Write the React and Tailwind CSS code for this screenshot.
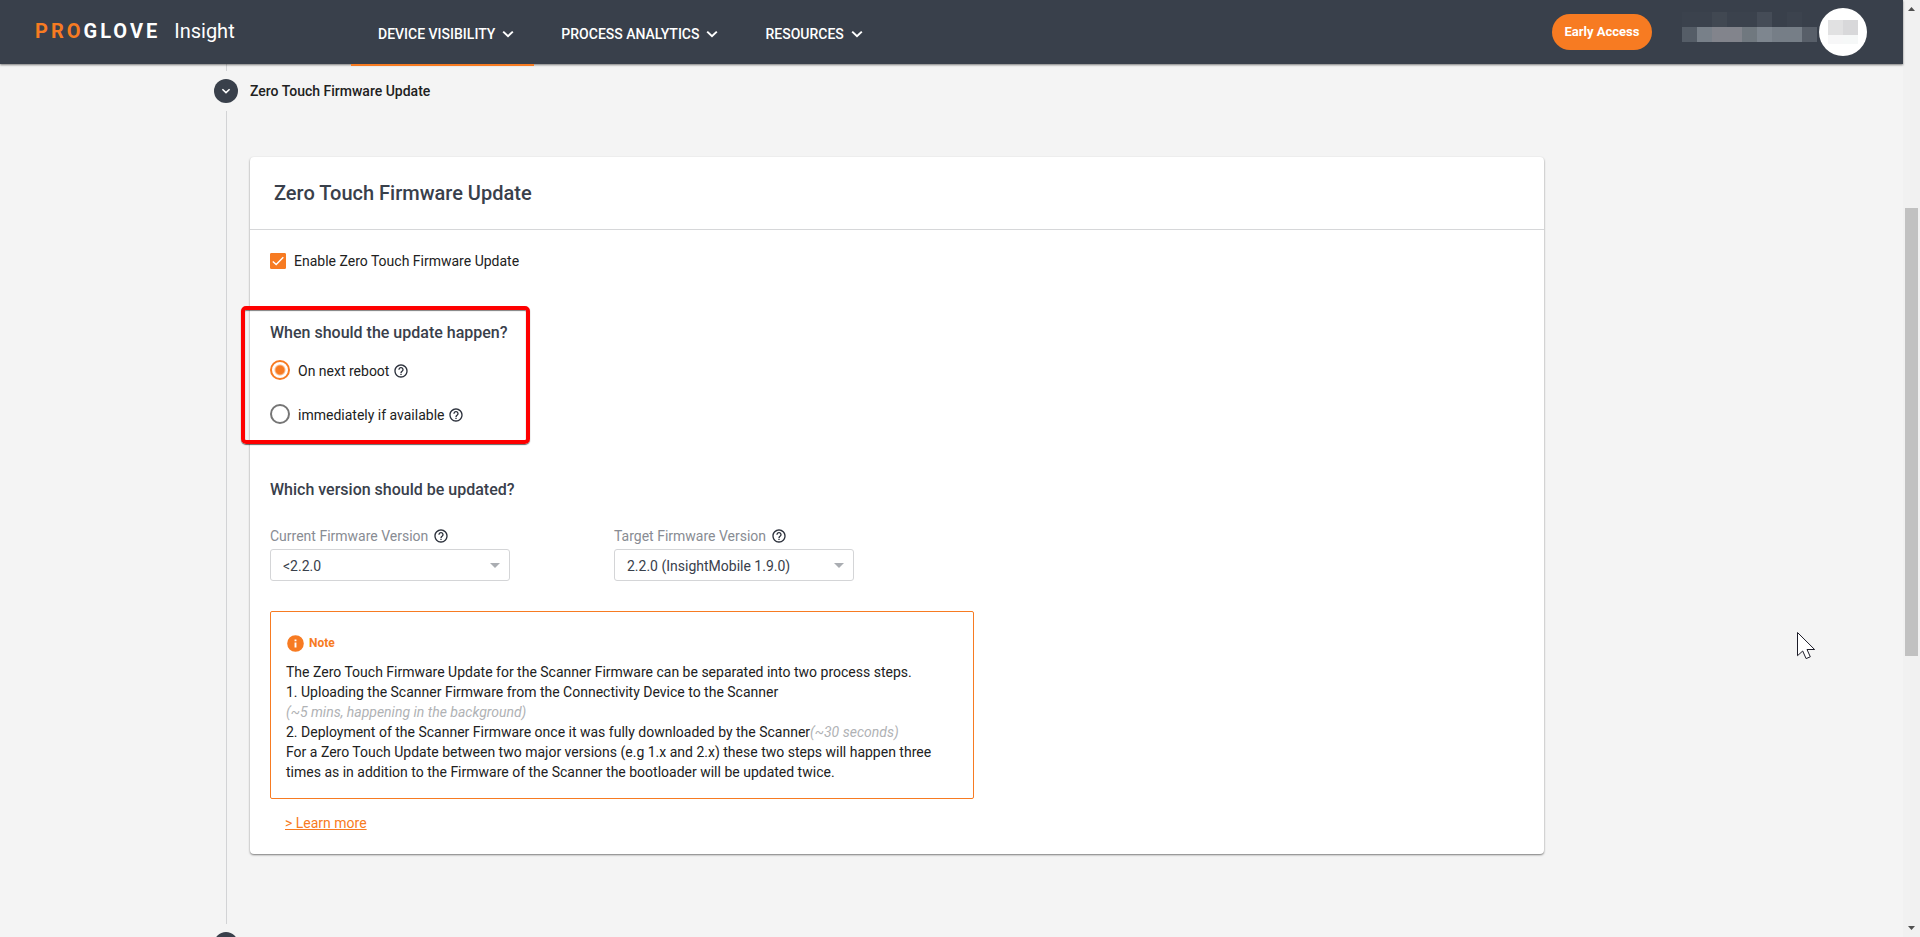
import React, { useState } from "react";

const NAV_ITEMS = ["DEVICE VISIBILITY", "PROCESS ANALYTICS", "RESOURCES"];

function ChevronDown({ className }) {
  return (
    <svg viewBox="0 0 24 24" className={className} fill="none" stroke="currentColor" strokeWidth="2" aria-hidden="true">
      <path d="M7.2 9.6 12 14.2l4.8-4.6" />
    </svg>
  );
}

function HelpIcon() {
  return (
    <svg viewBox="0 0 24 24" className="size-4 shrink-0 text-[#2b303b]" fill="currentColor" aria-hidden="true">
      <path d="M11 18h2v-2h-2v2zm1-16C6.480 2 2 6.480 2 12s4.480 10 10 10 10-4.480 10-10S17.520 2 12 2zm0 18c-4.410 0-8-3.590-8-8s3.590-8 8-8 8 3.590 8 8-3.590 8-8 8zm0-14c-2.210 0-4 1.790-4 4h2c0-1.100.9-2 2-2s2 .9 2 2c0 2-3 1.750-3 5h2c0-2.250 3-2.500 3-5 0-2.210-1.790-4-4-4z" />
    </svg>
  );
}

function RedactedName() {
  const top = ["bg-[#3b424d]", "bg-[#3b424d]", "bg-[#414852]", "bg-[#3b424d]", "bg-[#3b424d]", "bg-[#454c57]", "bg-[#39404b]", "bg-[#3c434e]", "bg-[#39404b]"];
  const bottom = ["bg-[#555d67]", "bg-[#788089]", "bg-[#82848c]", "bg-[#82848c]", "bg-[#70787f]", "bg-[#7e868f]", "bg-[#767e87]", "bg-[#767e87]", "bg-[#585f69]"];
  return (
    <div className="grid grid-cols-9 w-[135px]" aria-hidden="true">
      {[...top, ...bottom].map((c, i) => (
        <span key={i} className={"h-[15px] " + c} />
      ))}
    </div>
  );
}

function Header() {
  return (
    <header className="relative z-10 flex h-16 shrink-0 items-stretch bg-[#39404b] shadow-[0_1px_2px_rgba(0,0,0,0.5)]">
      <a href="#home" className="flex w-[351px] shrink-0 items-center pb-[2px] pl-[35px] text-white">
        <span className="text-[20px] font-bold tracking-[3px]">
          <span className="text-[#f77b22]">PRO</span>GLOVE
        </span>
        <span className="pl-[14px] text-[20px]">Insight</span>
      </a>
      <nav className="flex items-stretch">
        {NAV_ITEMS.map((label, i) => (
          <button
            key={label}
            type="button"
            className={
              "-mb-[2px] flex items-center gap-px border-b-2 pt-1 pl-[27px] pr-[14px] text-[14px] font-medium text-white " +
              (i === 0 ? "border-[#f77b22]" : "border-transparent")
            }
          >
            {label}
            <ChevronDown className="size-6" />
          </button>
        ))}
      </nav>
      <div className="ml-auto flex items-center pr-9">
        <button type="button" className="h-9 w-[100px] rounded-full bg-[#f77b22] text-[13px] font-bold text-white">
          Early Access
        </button>
        <div className="ml-[30px] mr-[2px] -mt-[10px]">
          <RedactedName />
        </div>
        <div className="flex size-12 items-center justify-center rounded-full bg-white">
          <div className="grid grid-cols-2 w-[30px]" aria-hidden="true">
            <span className="h-[15px] bg-[#e1e1e2]" />
            <span className="h-[15px] bg-[#d8d8da]" />
            <span className="h-[9px] bg-[#f7f7f8]" />
            <span className="h-[9px] bg-[#f6f8f8]" />
          </div>
        </div>
      </div>
    </header>
  );
}

function StepDot() {
  return (
    <span className="flex size-6 shrink-0 items-center justify-center rounded-full bg-[#39404b] text-white">
      <ChevronDown className="size-[18px]" />
    </span>
  );
}

function RadioOption({ id, label, checked, onChange }) {
  return (
    <div className="flex h-5 items-center">
      <input
        id={id}
        type="radio"
        name="update-time"
        checked={checked}
        onChange={onChange}
        className="size-5 shrink-0 appearance-none rounded-full border-2 border-[#757575] bg-white checked:border-[#f77b22] checked:bg-[radial-gradient(circle,#f77b22_4px,transparent_6px)]"
      />
      <label htmlFor={id} className="pl-2 pr-1 pt-[2px] text-[14px] leading-5 text-[#212121]">
        {label}
      </label>
      <span className="pt-[2px]">
        <HelpIcon />
      </span>
    </div>
  );
}

function VersionSelect({ id, label, options }) {
  return (
    <div className="w-60">
      <div className="flex items-center gap-[5px]">
        <label htmlFor={id} className="text-[14px] leading-5 text-[#888c93]">
          {label}
        </label>
        <HelpIcon />
      </div>
      <div className="relative mt-[3px]">
        <select
          id={id}
          className="block h-8 w-full appearance-none rounded-[3px] border border-[#d4d5d7] bg-white pl-3 pr-8 pt-[2px] text-[14px] text-[#39404b]"
        >
          {options.map((o) => (
            <option key={o}>{o}</option>
          ))}
        </select>
        <svg viewBox="0 0 10 5" className="pointer-events-none absolute right-[10px] top-[14px] h-[5px] w-[10px] text-[#aaadb2]" aria-hidden="true">
          <path d="M0 0h10L5 5z" fill="currentColor" />
        </svg>
      </div>
    </div>
  );
}

function NoteBox() {
  return (
    <section className="mt-[30px] max-w-[704px] rounded-[2px] border border-[#f77b22] px-[15px] pb-4 pt-[23px]">
      <h4 className="flex items-center gap-1 text-[12px] font-bold leading-4 text-[#f77b22]">
        <svg viewBox="0 0 24 24" className="-my-[2px] size-[19px]" aria-hidden="true">
          <path
            fill="currentColor"
            d="M12 1.500a10.500 10.500 0 1 0 0 21 10.500 10.500 0 0 0 0-21zM13.200 17h-2.400v-6.200h2.400v6.200zm0-7.800h-2.400V7h2.400v2.200z"
          />
        </svg>
        Note
      </h4>
      <div className="pt-[11px] text-[14px] leading-5 text-[#212121]">
        <p>The Zero Touch Firmware Update for the Scanner Firmware can be separated into two process steps.</p>
        <p>1. Uploading the Scanner Firmware from the Connectivity Device to the Scanner</p>
        <p className="italic text-[#b0b2b5]">(~5 mins, happening in the background)</p>
        <p>
          2. Deployment of the Scanner Firmware once it was fully downloaded by the Scanner
          <em className="text-[#b0b2b5]">(~30 seconds)</em>
        </p>
        <p>
          For a Zero Touch Update between two major versions (e.g 1.x and 2.x) these two steps will happen three times
          as in addition to the Firmware of the Scanner the bootloader will be updated twice.
        </p>
      </div>
    </section>
  );
}

function UpdateCard() {
  const [enabled, setEnabled] = useState(true);
  const [when, setWhen] = useState("reboot");
  return (
    <section className="rounded bg-white shadow-[0_1px_2px_rgba(0,0,0,0.5)]">
      <h2 className="border-b border-[#d6d7d9] px-6 py-5 text-[20px] font-medium leading-8 text-[#39404b]">
        Zero Touch Firmware Update
      </h2>
      <div className="px-5 pb-[19px] pt-[21px]">
        <div className="flex items-center">
          <span className="relative flex size-4">
            <input
              id="enable"
              type="checkbox"
              checked={enabled}
              onChange={(e) => setEnabled(e.target.checked)}
              className="peer size-4 appearance-none rounded-[1px] border border-[#757575] checked:border-[#f77b22] checked:bg-[#f77b22]"
            />
            <svg viewBox="0 0 16 16" className="pointer-events-none absolute inset-0 size-4 opacity-0 peer-checked:opacity-100" fill="none" stroke="#fff" strokeWidth="1.4" aria-hidden="true">
              <path d="M2.800 8.400 6.200 11.600 13.300 4.300" />
            </svg>
          </span>
          <label htmlFor="enable" className="pl-2 text-[14px] leading-5 text-[#212121]">
            Enable Zero Touch Firmware Update
          </label>
        </div>

        <div role="radiogroup" aria-labelledby="when-heading" className="relative mt-[50px]">
          <h3 id="when-heading" className="text-[16px] font-medium leading-6 text-[#39404b]">
            When should the update happen?
          </h3>
          <div className="flex flex-col gap-6 pt-[15px]">
            <RadioOption id="reboot" label="On next reboot" checked={when === "reboot"} onChange={() => setWhen("reboot")} />
            <RadioOption id="immediate" label="immediately if available" checked={when === "immediate"} onChange={() => setWhen("immediate")} />
          </div>
          <div className="pointer-events-none absolute -bottom-5 -left-[29px] -top-[15px] w-[289px] rounded-[5px] border-4 border-[#fe0000] shadow-[0_1px_1px_rgba(0,0,0,0.6),inset_0_1px_1px_rgba(0,0,0,0.5)]" />
        </div>

        <h3 className="mt-[54px] text-[16px] font-medium leading-6 text-[#39404b]">Which version should be updated?</h3>
        <div className="mt-6 flex gap-[104px]">
          <VersionSelect id="current" label="Current Firmware Version" options={["<2.2.0"]} />
          <VersionSelect id="target" label="Target Firmware Version" options={["2.2.0 (InsightMobile 1.9.0)"]} />
        </div>

        <NoteBox />
        <a href="#learn-more" className="ml-[15px] mt-[14px] inline-block text-[14px] leading-5 text-[#f77b22] underline">
          &gt; Learn more
        </a>
      </div>
    </section>
  );
}

function Scrollbar() {
  return (
    <div className="flex w-[17px] shrink-0 flex-col items-center justify-between bg-[#f1f1f1] py-[7px]" aria-hidden="true">
      <svg viewBox="0 0 7 4" className="h-1 w-[7px]">
        <path d="M0 4h7L3.500 0z" fill="#505050" />
      </svg>
      <div className="flex w-[13px] flex-1 flex-col">
        <div className="flex-[197]" />
        <div className="flex-[448] bg-[#c1c1c1]" />
        <div className="flex-[270]" />
      </div>
      <svg viewBox="0 0 7 4" className="h-1 w-[7px]">
        <path d="M0 0h7L3.500 4z" fill="#505050" />
      </svg>
    </div>
  );
}

export default function App() {
  return (
    <div className="flex h-screen overflow-hidden bg-[#f4f4f4] font-[Roboto,sans-serif]">
      <div className="flex min-w-0 flex-1 flex-col">
        <Header />
        <main className="min-h-0 flex-1 overflow-hidden">
          <div className="mx-auto max-w-[1475px] pr-[145px]">
            <div className="ml-3 h-[7px] w-px bg-[#d2d3d5]" />
            <div className="flex items-center gap-3 py-2">
              <StepDot />
              <h1 className="text-[14px] font-medium leading-5 text-[#212121]">Zero Touch Firmware Update</h1>
            </div>
            <div className="ml-3 border-l border-[#d2d3d5] pb-[70px] pl-[23px] pt-[46px]">
              <UpdateCard />
            </div>
            <div className="py-2">
              <StepDot />
            </div>
          </div>
        </main>
      </div>
      <Scrollbar />
      <svg viewBox="0 0 19 28" className="pointer-events-none absolute left-[1797px] top-[632px] h-7 w-[19px]" aria-hidden="true">
        <path d="M.5.5v23.200l5.200-4.700 3.400 7.600 4.200-1.800-3.300-7.300h7.600z" fill="#fff" stroke="#1c1c28" strokeWidth="1" />
      </svg>
    </div>
  );
}
